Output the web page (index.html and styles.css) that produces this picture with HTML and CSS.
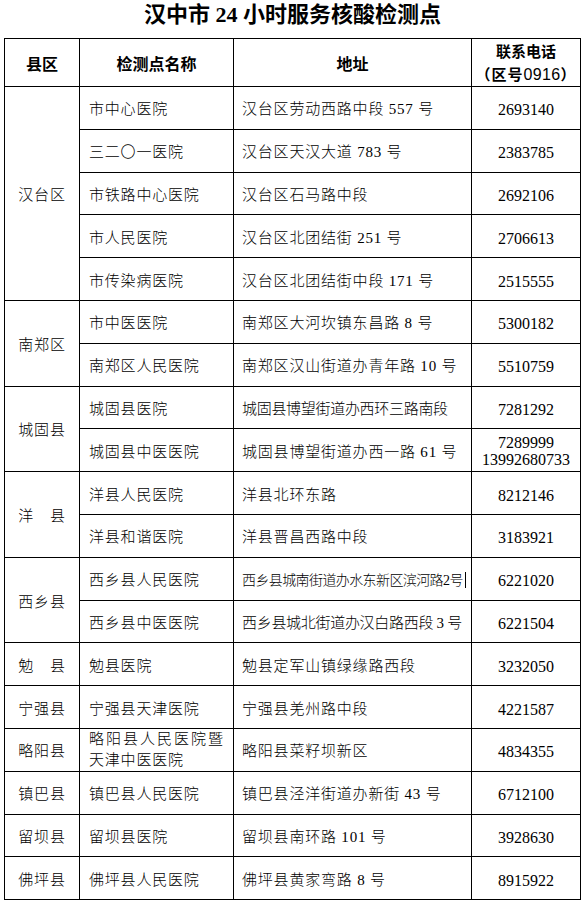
FILE: index.html
```html
<!DOCTYPE html>
<html lang="zh-CN">
<head>
<meta charset="utf-8">
<title>汉中市24小时服务核酸检测点</title>
<link rel="stylesheet" href="styles.css">
</head>
<body>
<h1 class="title">汉中市 24 小时服务核酸检测点</h1>
<table class="sites">
  <colgroup>
    <col class="c-county">
    <col class="c-name">
    <col class="c-addr">
    <col class="c-tel">
  </colgroup>
  <thead>
    <tr>
      <th>县区</th>
      <th>检测点名称</th>
      <th>地址</th>
      <th class="th-tel">联系电话<br><span class="area">（区号<span class="num">0916</span>）</span></th>
    </tr>
  </thead>
  <tbody>
    <tr><td class="county" rowspan="5">汉台区</td><td class="name">市中心医院</td><td class="addr">汉台区劳动西路中段 557 号</td><td class="tel">2693140</td></tr>
    <tr><td class="name">三二〇一医院</td><td class="addr">汉台区天汉大道 783 号</td><td class="tel">2383785</td></tr>
    <tr><td class="name">市铁路中心医院</td><td class="addr">汉台区石马路中段</td><td class="tel">2692106</td></tr>
    <tr><td class="name">市人民医院</td><td class="addr">汉台区北团结街 251 号</td><td class="tel">2706613</td></tr>
    <tr><td class="name">市传染病医院</td><td class="addr">汉台区北团结街中段 171 号</td><td class="tel">2515555</td></tr>

    <tr><td class="county" rowspan="2">南郑区</td><td class="name">市中医医院</td><td class="addr">南郑区大河坎镇东昌路 8 号</td><td class="tel">5300182</td></tr>
    <tr><td class="name">南郑区人民医院</td><td class="addr">南郑区汉山街道办青年路 10 号</td><td class="tel">5510759</td></tr>

    <tr><td class="county" rowspan="2">城固县</td><td class="name">城固县医院</td><td class="addr addr-snug">城固县博望街道办西环三路南段</td><td class="tel">7281292</td></tr>
    <tr><td class="name">城固县中医医院</td><td class="addr">城固县博望街道办西一路 61 号</td><td class="tel tel-two">7289999<br>13992680733</td></tr>

    <tr><td class="county" rowspan="2">洋　县</td><td class="name">洋县人民医院</td><td class="addr">洋县北环东路</td><td class="tel">8212146</td></tr>
    <tr><td class="name">洋县和谐医院</td><td class="addr">洋县晋昌西路中段</td><td class="tel">3183921</td></tr>

    <tr><td class="county" rowspan="2">西乡县</td><td class="name">西乡县人民医院</td><td class="addr addr-tight">西乡县城南街道办水东新区滨河路2号<span class="caret"></span></td><td class="tel">6221020</td></tr>
    <tr><td class="name">西乡县中医医院</td><td class="addr addr-snug">西乡县城北街道办汉白路西段 3 号</td><td class="tel">6221504</td></tr>

    <tr><td class="county">勉　县</td><td class="name">勉县医院</td><td class="addr">勉县定军山镇绿缘路西段</td><td class="tel">3232050</td></tr>
    <tr><td class="county">宁强县</td><td class="name">宁强县天津医院</td><td class="addr">宁强县羌州路中段</td><td class="tel">4221587</td></tr>
    <tr><td class="county">略阳县</td><td class="name name-two"><span class="spread">略阳县人民医院暨</span><br>天津中医医院</td><td class="addr">略阳县菜籽坝新区</td><td class="tel">4834355</td></tr>
    <tr><td class="county">镇巴县</td><td class="name">镇巴县人民医院</td><td class="addr">镇巴县泾洋街道办新街 43 号</td><td class="tel">6712100</td></tr>
    <tr><td class="county">留坝县</td><td class="name">留坝县医院</td><td class="addr">留坝县南环路 101 号</td><td class="tel">3928630</td></tr>
    <tr><td class="county">佛坪县</td><td class="name">佛坪县人民医院</td><td class="addr">佛坪县黄家弯路 8 号</td><td class="tel">8915922</td></tr>
  </tbody>
</table>
</body>
</html>
```

FILE: styles.css
```css
html, body {
  margin: 0;
  padding: 0;
  background: #ffffff;
  color: #000000;
}

body {
  font-family: "Liberation Serif", "Noto Sans CJK SC", serif;
}

.title {
  margin: 0;
  height: 38px;
  line-height: 30px;
  font-size: 22px;
  font-weight: 700;
  text-align: center;
  letter-spacing: 0;
}

.sites {
  margin-left: 4px;
  width: 576px;
  border-collapse: collapse;
  table-layout: fixed;
  border: 1.5px solid #000;
}

.c-county { width: 75px; }
.c-name { width: 154px; }
.c-addr { width: 238px; }
.c-tel { width: 109px; }

.sites th,
.sites td {
  border: 1px solid #000;
  padding: 0;
  vertical-align: middle;
}

.sites thead tr {
  height: 48px;
}

.sites th {
  font-family: "Noto Sans CJK SC", sans-serif;
  font-weight: 700;
  font-size: 16px;
  line-height: 22px;
  text-align: center;
}

.sites th.th-tel {
  font-size: 15px;
}

.area {
  display: inline-block;
  margin-top: 1px;
  letter-spacing: 1px;
}

.sites th .num {
  font-family: "Liberation Sans", sans-serif;
  font-weight: 400;
  font-size: 16px;
  letter-spacing: 0.3px;
}

.sites tbody tr {
  height: 42.8px;
}

.sites td {
  font-size: 15px;
  font-weight: 300;
  line-height: 21px;
  letter-spacing: 0.8px;
  white-space: nowrap;
  padding-top: 4px;
}

.county {
  text-align: center;
}

.name {
  padding-left: 9px !important;
  text-align: left;
}

.sites td.name-two {
  padding-top: 0;
  line-height: 20.5px;
}

.spread {
  letter-spacing: 2px;
}

.addr {
  padding-left: 8px !important;
  text-align: left;
}

.addr-snug {
  letter-spacing: -0.3px !important;
}

.addr-tight {
  font-size: 14px !important;
  letter-spacing: -0.6px !important;
}

.caret {
  display: inline-block;
  width: 1px;
  height: 16px;
  margin-left: 2px;
  background: #000;
  vertical-align: -3px;
}

.tel {
  text-align: center;
  font-size: 16px !important;
  font-weight: 400 !important;
  letter-spacing: 0 !important;
}

.tel-two {
  line-height: 17px !important;
  padding-top: 1px !important;
}
```
